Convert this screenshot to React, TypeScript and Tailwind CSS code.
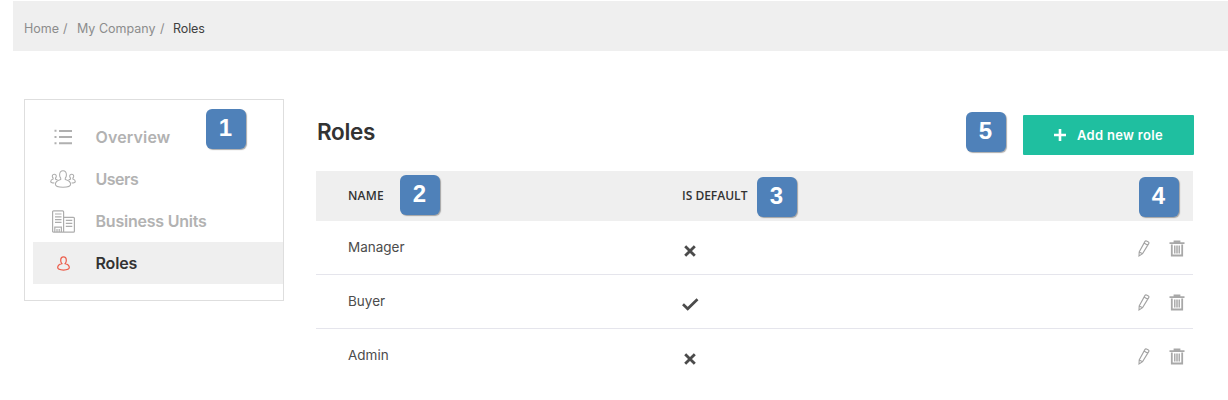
import React from "react";

function Badge({ n, className }: { n: number; className: string }) {
  return (
    <span
      className={`absolute flex h-10 w-10 items-center justify-center rounded-[6px] bg-[#4f81b9] pr-px pb-[3px] font-['Liberation_Sans',sans-serif] text-[24px] leading-none font-bold text-white shadow-[1px_1px_1px_0px_rgba(90,90,90,0.5)] ${className}`}
    >
      {n}
    </span>
  );
}

function ListIcon() {
  return (
    <svg width="18" height="16" viewBox="0 0 18 16" fill="#b0b0b0">
      <path d="M.5.800h2v2h-2zM5 1h13v2H5zM.5 7h2v2h-2zM5 7h13v2H5zM.5 13.200h2v2h-2zM5 13.200h13v2H5z" />
    </svg>
  );
}

function UsersIcon() {
  return (
    <svg width="26" height="18" viewBox="0 0 26 18" fill="none" stroke="#adadad" strokeWidth="1.050">
      <path d="M10.700 8.100C10 7.300 9.600 6.200 9.600 5c0-2.500 1.300-4.300 3.400-4.300S16.400 2.500 16.400 5c0 1.200-.4 2.300-1.100 3.100v1.400c2.800.8 5.300 1.500 5.300 4.700 0 2-3.400 3-7.600 3s-7.600-1-7.600-3c0-3.200 2.500-3.900 5.300-4.700z" />
      <path d="M7.500 9.900 5.500 9.100V8c.5-.4.8-1 .8-1.700 0-1.200-.8-2-2-2s-2 .8-2 2c0 .7.300 1.300.8 1.700v1.100C1.900 9.500.7 9.900.7 11.400c0 1 1.500 1.500 3.700 1.500M18.500 9.900l2-.8V8c-.5-.4-.8-1-.8-1.700 0-1.200.8-2 2-2s2 .8 2 2c0 .7-.3 1.300-.8 1.700v1.100c1.200.4 2.400.8 2.400 2.300 0 1-1.500 1.500-3.700 1.500" />
    </svg>
  );
}

function BuildingIcon() {
  return (
    <svg width="23" height="23" viewBox="0 0 23 23" fill="none" stroke="#adadad" strokeWidth="1.200">
      <path d="M1.600.8h9q1 0 1 1v20.400H1.600q-1 0-1-1V1.800q0-1 1-1zM11.600 7.300h9.800q1 0 1 1v12.900q0 1-1 1h-9.800M3 4h6.500M3 6.800h6.500M3 9.600h6.500M3 12.400h6.500M13.800 10.400h6.500M13.800 13.400h6.500M13.800 16.400h6.500M2.800 22v-4.800h6.600V22M5 19v3M7.200 19v3" />
    </svg>
  );
}

function RoleIcon() {
  return (
    <svg width="13" height="15" viewBox="0 0 13 15" fill="none" stroke="#ec5f4d" strokeWidth="1.250">
      <path d="M4.800 7.700C4.100 7 3.700 5.700 3.700 4.300 3.700 2.300 4.700.8 6.500.8s2.800 1.500 2.800 3.500c0 1.400-.4 2.700-1.100 3.400 2.300.6 4.100 1.700 4.100 3.900 0 1.700-2.500 2.400-5.800 2.400S.7 13.300.7 11.600c0-2.200 1.800-3.300 4.100-3.900z" />
    </svg>
  );
}

function Pencil() {
  return (
    <svg width="12" height="17" viewBox="0 0 12 17" fill="none" stroke="#a3a3a3" strokeWidth="1.100">
      <path d="M7 1.400q.6-.9 1.500-.4l1.900 1.100q.9.500.3 1.500L4.600 13.600 1 15.900l.2-4zM6 3l3.800 2.200M1.200 11.900l3.400 1.800" />
    </svg>
  );
}

function Trash() {
  return (
    <svg width="16" height="17" viewBox="0 0 16 17" fill="none" stroke="#a8a8a8">
      <path d="M.5 3.200h15M5.500 2.500V1.300h5v1.200" strokeWidth="1.800" />
      <path d="M2.800 4.500v11h10.400v-11" strokeWidth="1.800" />
      <path d="M5.600 5.500v8M7.200 5.500v8M8.800 5.500v8M10.400 5.500v8" strokeWidth="1.100" />
    </svg>
  );
}

function Mark({ yes }: { yes: boolean }) {
  return yes ? (
    <svg width="17" height="13" viewBox="0 0 17 13" fill="none" stroke="#4b4b4b" strokeWidth="2.700" className="shrink-0">
      <path d="M1 6.300 5.700 10.800 15.500 1.300" />
    </svg>
  ) : (
    <svg width="12" height="12" viewBox="0 0 12 12" fill="none" stroke="#4b4b4b" strokeWidth="2.800">
      <path d="M1.200 1.200l9.600 9.600M10.800 1.200l-9.600 9.600" />
    </svg>
  );
}

const menu = [
  { label: "Overview", icon: <ListIcon />, text: "tracking-[0.150px]" },
  { label: "Users", icon: <UsersIcon />, text: "tracking-[-0.5px]" },
  { label: "Business Units", icon: <BuildingIcon />, text: "tracking-[-0.220px]" },
  { label: "Roles", icon: <RoleIcon />, text: "tracking-[-0.150px]", active: true },
];

const roles = [
  { name: "Manager", isDefault: false },
  { name: "Buyer", isDefault: true },
  { name: "Admin", isDefault: false },
];

export default function App() {
  return (
    <div className="relative h-[400px] w-[1228px] overflow-hidden bg-white font-['Inter','Liberation_Sans',sans-serif] text-[#333]">
      <div className="pt-px pl-[13px]">
        <nav className="flex h-[50px] items-center bg-[#efefef] pt-[7px] pl-[11px] text-[12.500px] text-[#8c8c8c]">
          <span className="w-[39px]">Home</span>
          <span className="w-[14px]">/</span>
          <span className="w-[83px]">My Company</span>
          <span className="w-[13px]">/</span>
          <span className="tracking-[-0.1px] text-[#404040]">Roles</span>
        </nav>
      </div>

      <div className="flex items-start pt-12 pl-6">
        <aside className="relative h-[202px] w-[260px] border border-[#dedede] pt-4 pl-2">
          <ul>
            {menu.map((m) => (
              <li
                key={m.label}
                className={`flex h-[42px] items-center text-[16px] font-semibold ${
                  m.active ? "bg-[#efefef] text-[#333]" : "text-[#b2b2b2]"
                }`}
              >
                <span className="flex w-[60px] justify-center">{m.icon}</span>
                <span className={`pl-[2.500px] ${m.text}`}>{m.label}</span>
              </li>
            ))}
          </ul>
          <Badge n={1} className="top-[9px] left-[181px]" />
        </aside>

        <main className="ml-8 w-[877px]">
          <header className="relative flex h-[72px] items-start justify-between">
            <h1 className="pt-[17px] pl-px text-[22.500px] leading-8 font-semibold tracking-[-0.300px]">Roles</h1>
            <button className="mt-4 -mr-px flex h-10 w-[171px] items-center rounded-[1px] bg-[#1fbfa0] pl-[31px] text-[13px] font-semibold text-white">
              <svg width="12" height="12" viewBox="0 0 12 12" stroke="white" strokeWidth="2.600">
                <path d="M6 0v12M0 6h12" />
              </svg>
              <span className="pt-px pl-[11px] tracking-[0.300px]">Add new role</span>
            </button>
            <Badge n={5} className="top-[13px] left-[650px]" />
          </header>

          <div className="relative flex h-[50px] items-center bg-[#efefef] pl-8 font-['Open_Sans',sans-serif] text-[12px] font-semibold">
            <span className="w-[334px] tracking-[0.200px]">NAME</span>
            <span>IS DEFAULT</span>
            <Badge n={2} className="top-[4px] left-[84px]" />
            <Badge n={3} className="top-[6px] left-[441px]" />
            <Badge n={4} className="top-[6px] left-[823px]" />
          </div>

          {roles.map((r, i) => (
            <div
              key={r.name}
              className={`flex h-[54px] items-center border-b pl-8 text-[13.500px] text-[#4c4c4c] ${
                i < 2 ? "border-[#e5e5ec]" : "border-transparent"
              }`}
            >
              <span className="w-[334px]">{r.name}</span>
              <span className="flex w-4 justify-center pt-[6px]">
                <Mark yes={r.isDefault} />
              </span>
              <span className="ml-auto flex gap-[19px] pt-px pr-2">
                <Pencil />
                <Trash />
              </span>
            </div>
          ))}
        </main>
      </div>
    </div>
  );
}
